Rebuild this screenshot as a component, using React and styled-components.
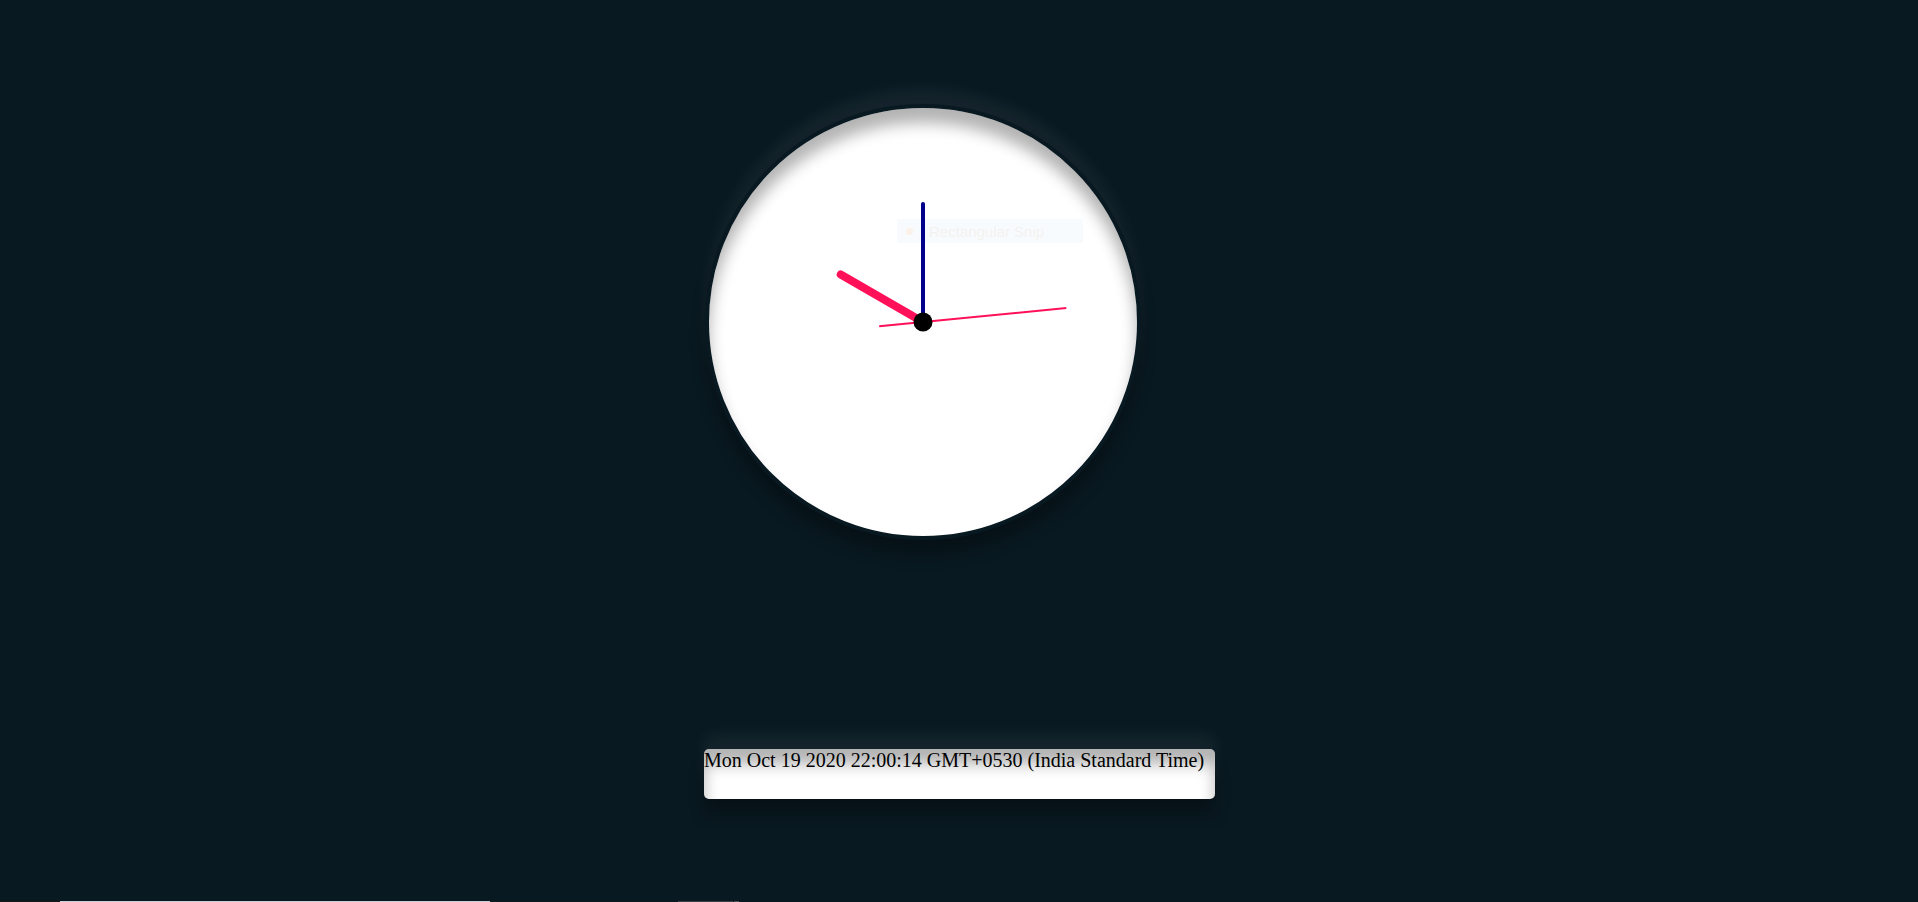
import React from "react"
import styled, { createGlobalStyle } from "styled-components"

const GlobalStyle = createGlobalStyle`
  html, body {
    margin: 0;
    padding: 0;
    background: #091921;
    overflow: hidden;
  }
`

const softShadow = `
  0 -15px 15px rgba(255, 255, 255, 0.05),
  inset 0 -15px 15px rgba(255, 255, 255, 0.05),
  0 15px 15px rgba(0, 0, 0, 0.3),
  inset 0 15px 15px rgba(0, 0, 0, 0.3)
`

const Page = styled.div`
  min-height: 100vh;
  height: 902px;
  display: flex;
  flex-direction: column;
  background: #091921;
  box-sizing: border-box;
`

const Main = styled.main`
  display: flex;
  flex-direction: column;
  align-items: flex-start;
  padding: 104px 0 0 704px;
`

const Clock = styled.div`
  position: relative;
  width: 428px;
  height: 428px;
  margin-left: 1px;
  background: #fff;
  border: 4px solid #091921;
  border-radius: 50%;
  box-shadow: ${softShadow};
`

const Hands = styled.svg`
  position: absolute;
  inset: 0;
  width: 100%;
  height: 100%;
`

// faint leftover of the snipping tool tooltip, caught in the screenshot
const SnipHint = styled.div`
  position: absolute;
  left: 188px;
  top: 111px;
  width: 186px;
  height: 24px;
  display: flex;
  align-items: center;
  gap: 16px;
  padding-left: 9px;
  box-sizing: border-box;
  background: #f8fbfe;
  font-family: "Liberation Sans", Arial, sans-serif;
  font-size: 15px;
  color: #f4f2ef;
`

const SnipDot = styled.span`
  width: 7px;
  height: 7px;
  border-radius: 50%;
  background: #fbf1e8;
`

const DateBox = styled.div`
  width: 511px;
  height: 50px;
  margin-top: 209px;
  background: #fff;
  border-radius: 5px;
  box-shadow: ${softShadow};
  font-family: "Liberation Serif", "Times New Roman", serif;
  font-size: 20px;
  line-height: 23px;
  color: #000;
  white-space: nowrap;
`

const Footer = styled.footer`
  margin-top: auto;
  height: 1px;
  display: flex;
`

const Segment = styled.span`
  width: ${p => p.w}px;
  background: ${p => p.c};
`

const hand = (angle, length, tail = 0) => {
  const r = (angle * Math.PI) / 180
  const cx = 214
  const cy = 214
  return {
    x1: cx - Math.sin(r) * tail,
    y1: cy + Math.cos(r) * tail,
    x2: cx + Math.sin(r) * length,
    y2: cy - Math.cos(r) * length,
  }
}

export default function App() {
  return (
    <Page>
      <GlobalStyle />
      <Main>
        <Clock>
          <SnipHint>
            <SnipDot />
            Rectangular Snip
          </SnipHint>
          <Hands viewBox="0 0 428 428">
            <line {...hand(300, 95)} stroke="#ff1058" strokeWidth="8" strokeLinecap="round" />
            <line {...hand(0, 118)} stroke="#00008b" strokeWidth="4" strokeLinecap="round" />
            <line {...hand(84.4, 144, 44)} stroke="#ff1058" strokeWidth="2" />
            <circle cx="214" cy="214" r="9.5" fill="#000" />
          </Hands>
        </Clock>
        <DateBox>Mon Oct 19 2020 22:00:14 GMT+0530 (India Standard Time)</DateBox>
      </Main>
      <Footer>
        <Segment w={60} c="#1a1816" />
        <Segment w={430} c="#c9cdd1" />
        <Segment w={188} c="#0c1a22" />
        <Segment w={55} c="#3b4147" />
        <Segment w={1} c="#0c1a22" />
        <Segment w={5} c="#4a5056" />
      </Footer>
    </Page>
  )
}
